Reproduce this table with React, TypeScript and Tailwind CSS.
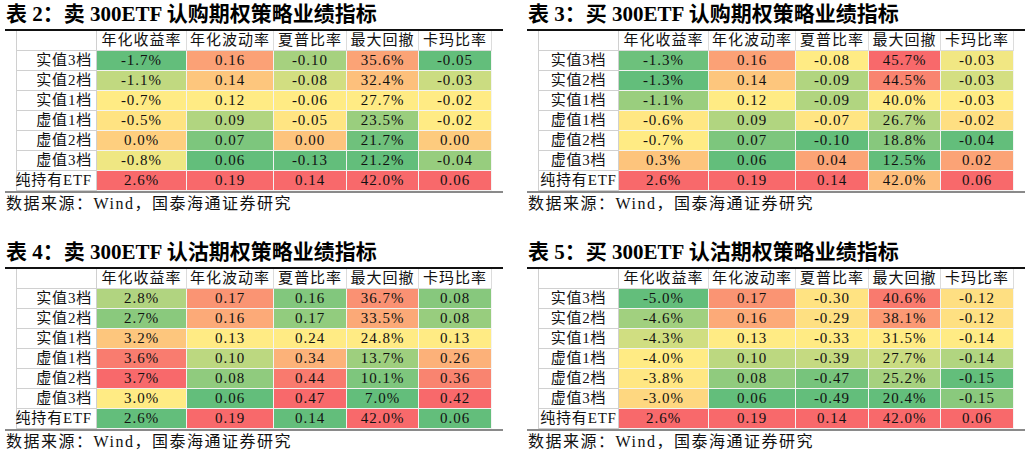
import React from 'react'

/* ============================================================
   Data
   ============================================================ */

type Column = {
  text: string[]
  /** values that drive the colour scale (defaults to parsed text) */
  vals?: number[]
}

type TableData = {
  title: string
  labelAlign: 'right' | 'center'
  cols: Column[]
}

const LABELS = ['实值3档', '实值2档', '实值1档', '虚值1档', '虚值2档', '虚值3档', '纯持有ETF']
const HEADERS = ['年化收益率', '年化波动率', '夏普比率', '最大回撤', '卡玛比率']
const VOL = ['0.16', '0.14', '0.12', '0.09', '0.07', '0.06', '0.19']
const VOL_PUT = ['0.17', '0.16', '0.13', '0.10', '0.08', '0.06', '0.19']

const TABLES: TableData[] = [
  {
    title: '表 2：卖 300ETF 认购期权策略业绩指标',
    labelAlign: 'right',
    cols: [
      { text: ['-1.7%', '-1.1%', '-0.7%', '-0.5%', '0.0%', '-0.8%', '2.6%'] },
      { text: VOL },
      { text: ['-0.10', '-0.08', '-0.06', '-0.05', '0.00', '-0.13', '0.14'] },
      { text: ['35.6%', '32.4%', '27.7%', '23.5%', '21.7%', '21.2%', '42.0%'] },
      { text: ['-0.05', '-0.03', '-0.02', '-0.02', '0.00', '-0.04', '0.06'] },
    ],
  },
  {
    title: '表 3：买 300ETF 认购期权策略业绩指标',
    labelAlign: 'center',
    cols: [
      {
        text: ['-1.3%', '-1.3%', '-1.1%', '-0.6%', '-0.7%', '0.3%', '2.6%'],
        vals: [-1.28, -1.32, -1.1, -0.6, -0.7, 0.3, 2.6],
      },
      { text: VOL },
      { text: ['-0.08', '-0.09', '-0.09', '-0.07', '-0.10', '0.04', '0.14'] },
      { text: ['45.7%', '44.5%', '40.0%', '26.7%', '18.8%', '12.5%', '42.0%'] },
      {
        text: ['-0.03', '-0.03', '-0.03', '-0.02', '-0.04', '0.02', '0.06'],
        vals: [-0.03, -0.032, -0.029, -0.021, -0.04, 0.02, 0.06],
      },
    ],
  },
  {
    title: '表 4：卖 300ETF 认沽期权策略业绩指标',
    labelAlign: 'right',
    cols: [
      { text: ['2.8%', '2.7%', '3.2%', '3.6%', '3.7%', '3.0%', '2.6%'] },
      { text: VOL_PUT },
      { text: ['0.16', '0.17', '0.24', '0.34', '0.44', '0.47', '0.14'] },
      { text: ['36.7%', '33.5%', '24.8%', '13.7%', '10.1%', '7.0%', '42.0%'] },
      {
        text: ['0.08', '0.08', '0.13', '0.26', '0.36', '0.42', '0.06'],
        vals: [0.076, 0.084, 0.13, 0.26, 0.36, 0.42, 0.06],
      },
    ],
  },
  {
    title: '表 5：买 300ETF 认沽期权策略业绩指标',
    labelAlign: 'center',
    cols: [
      { text: ['-5.0%', '-4.6%', '-4.3%', '-4.0%', '-3.8%', '-3.0%', '2.6%'] },
      { text: VOL_PUT },
      { text: ['-0.30', '-0.29', '-0.33', '-0.39', '-0.47', '-0.49', '0.14'] },
      { text: ['40.6%', '38.1%', '31.5%', '27.7%', '25.2%', '20.4%', '42.0%'] },
      {
        text: ['-0.12', '-0.12', '-0.14', '-0.14', '-0.15', '-0.15', '0.06'],
        vals: [-0.12, -0.121, -0.138, -0.146, -0.154, -0.15, 0.06],
      },
    ],
  },
]

/* ============================================================
   Colour scale (green - yellow - red, midpoint = 50th percentile)
   ============================================================ */

const GREEN = [99, 190, 123]
const YELLOW = [255, 235, 132]
const RED = [248, 105, 107]

const mix = (a: number[], b: number[], t: number) =>
  `rgb(${a.map((c, i) => Math.round(c + (b[i] - c) * t)).join(',')})`

const scaleColor = (vals: number[], v: number) => {
  const s = [...vals].sort((a, b) => a - b)
  const rank = 0.5 * (s.length - 1)
  const lo = Math.floor(rank)
  const mid = s[lo] + (s[Math.ceil(rank)] - s[lo]) * (rank - lo)
  const min = s[0]
  const max = s[s.length - 1]
  if (v <= mid) return mix(YELLOW, GREEN, mid === min ? 0 : (mid - v) / (mid - min))
  return mix(YELLOW, RED, max === mid ? 0 : (v - mid) / (max - mid))
}

/* ============================================================
   Components
   ============================================================ */

const GRID = 'grid grid-cols-[81px_90px_87px_73px_72px_73px]'

const MetricsTable = ({ data }: { data: TableData }) => {
  const colVals = data.cols.map((c) => c.vals ?? c.text.map((t) => parseFloat(t)))

  return (
    <div className="flex flex-col">
      <div className="h-[31px] whitespace-nowrap border-b-2 border-[#111] pl-[1px] text-[21px] font-bold leading-[28px] text-black">
        {data.title}
      </div>

      <div className="ml-[11px] w-[476px]">
        <div className={GRID}>
          <div className="h-5 border-b border-l border-r border-[#d0d0d0]" />
          {HEADERS.map((h) => (
            <div
              key={h}
              className="flex h-5 items-center justify-center whitespace-nowrap border-b border-r border-[#dcdcdc] text-[15px] tracking-[1px] text-[#111]"
            >
              {h}
            </div>
          ))}
        </div>

        {LABELS.map((label, r) => (
          <div key={label} className={GRID}>
            <div
              className={`flex h-5 items-center whitespace-nowrap border-b border-l border-r border-[#d0d0d0] text-[15px] tracking-[0.8px] text-[#111] ${
                data.labelAlign === 'right' ? 'justify-end pr-[4px]' : 'justify-center'
              }`}
            >
              {label}
            </div>
            {data.cols.map((col, c) => (
              <div
                key={c}
                className="flex h-5 items-center justify-center whitespace-nowrap border-b border-r border-[#f3f3f3] text-[15px] tracking-[1px] text-[#111]"
                style={{ backgroundColor: scaleColor(colVals[c], colVals[c][r]) }}
              >
                {col.text[r]}
              </div>
            ))}
          </div>
        ))}
      </div>

      <div className="h-[2px] bg-[#8a8a8a]" />
      <div className="h-[22px] whitespace-nowrap pl-[1px] text-[16px] leading-[22px] tracking-[1.5px] text-[#111]">
        数据来源：Wind，国泰海通证券研究
      </div>
    </div>
  )
}

export default function App() {
  return (
    <div className="grid h-[456px] w-[1032px] grid-cols-[498px_498px] grid-rows-[238px_218px] gap-x-6 overflow-hidden bg-white pl-[5px] font-['Liberation_Serif','Noto_Sans_CJK_SC',serif]">
      {TABLES.map((t) => (
        <MetricsTable key={t.title} data={t} />
      ))}
    </div>
  )
}
